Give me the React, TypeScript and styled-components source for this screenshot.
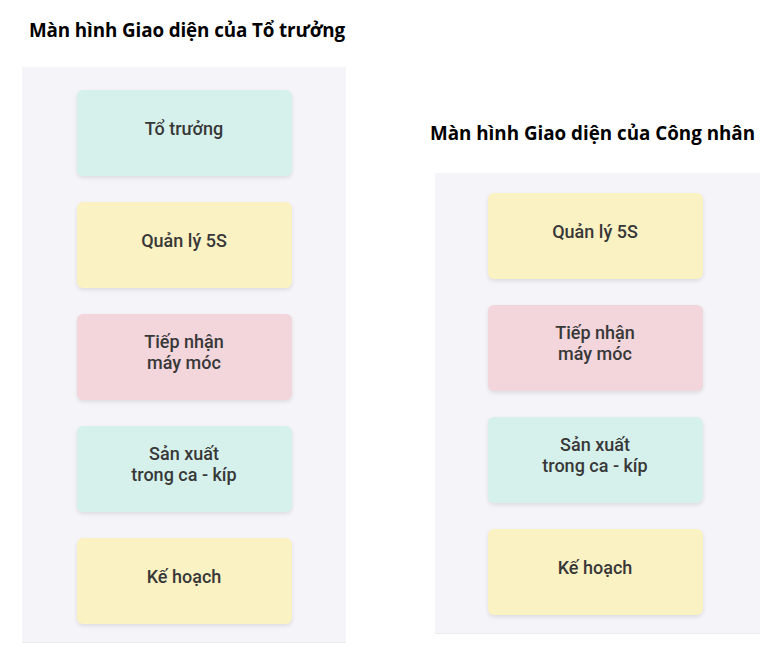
import { FC } from 'react'
import styled, { createGlobalStyle } from 'styled-components'

type Tone = 'teal' | 'yellow' | 'pink'

const tones: Record<Tone, string> = {
  teal: '#d6f1eb',
  yellow: '#fbf2c4',
  pink: '#f3d5dc',
}

const leaderItems: { label: string[]; tone: Tone }[] = [
  { label: ['Tổ trưởng'], tone: 'teal' },
  { label: ['Quản lý 5S'], tone: 'yellow' },
  { label: ['Tiếp nhận', 'máy móc'], tone: 'pink' },
  { label: ['Sản xuất', 'trong ca - kíp'], tone: 'teal' },
  { label: ['Kế hoạch'], tone: 'yellow' },
]

const workerItems = leaderItems.slice(1)

const App: FC = () => {
  return (
    <>
      <GlobalStyle />
      <Page>
        <Column>
          <Title>Màn hình Giao diện của Tổ trưởng</Title>
          <Panel $top={23} $bottom={18} $right={0}>
            {leaderItems.map((item) => (
              <Card key={item.label.join()} $tone={item.tone}>
                {item.label.map((line) => (
                  <span key={line}>{line}</span>
                ))}
              </Card>
            ))}
          </Panel>
        </Column>
        <RightColumn>
          <Title>Màn hình Giao diện của Công nhân</Title>
          <Panel $top={20} $bottom={18} $right={5}>
            {workerItems.map((item) => (
              <Card key={item.label.join()} $tone={item.tone}>
                {item.label.map((line) => (
                  <span key={line}>{line}</span>
                ))}
              </Card>
            ))}
          </Panel>
        </RightColumn>
      </Page>
    </>
  )
}

const GlobalStyle = createGlobalStyle`
  body {
    margin: 0;
    background: #ffffff;
  }
`

const Page = styled.div`
  display: flex;
  flex-flow: row nowrap;
  align-items: flex-start;
  padding: 18px 0 0 22px;
`

const Column = styled.div`
  width: 324px;
  display: flex;
  flex-direction: column;
`

const RightColumn = styled(Column)`
  width: 325px;
  margin-left: 89px;
  margin-top: 103px;
`

const Title = styled.h2`
  margin: 0 0 25px 7px;
  font-family: 'Open Sans', 'Noto Sans', sans-serif;
  font-weight: 700;
  font-size: 18.8px;
  line-height: 24px;
  letter-spacing: -0.1px;
  color: #000;
  white-space: nowrap;

  ${RightColumn} & {
    margin: 0 0 28px -5px;
    letter-spacing: 0;
  }
`

const Panel = styled.div<{ $top: number; $bottom: number; $right: number }>`
  background: #f4f4f9;
  display: flex;
  flex-direction: column;
  align-items: center;
  gap: 26px;
  padding: ${({ $top, $bottom, $right }) => `${$top}px ${$right}px ${$bottom}px 0`};
  border-bottom: 1px solid #ebebef;
`

const Card = styled.div<{ $tone: Tone }>`
  width: 215px;
  height: 86px;
  box-sizing: border-box;
  border-radius: 6px;
  background: ${({ $tone }) => tones[$tone]};
  box-shadow: 0 2px 4px rgba(0, 0, 0, 0.1);
  display: flex;
  flex-direction: column;
  align-items: center;
  justify-content: center;
  padding-bottom: 10px;
  font-family: Roboto, 'Noto Sans', sans-serif;
  font-weight: 500;
  font-size: 18px;
  line-height: 21px;
  color: #383838;
  text-align: center;
`

export default App
